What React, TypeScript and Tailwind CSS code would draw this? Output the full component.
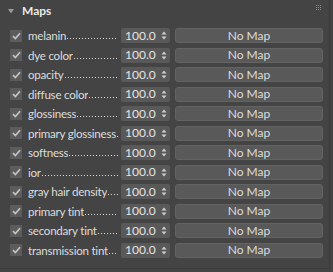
import React from "react";

const rows = [
  "melanin",
  "dye color",
  "opacity",
  "diffuse color",
  "glossiness",
  "primary glossiness",
  "softness",
  "ior",
  "gray hair density",
  "primary tint",
  "secondary tint",
  "transmission tint",
];

const Check = () => (
  <div className="flex h-[12px] w-[12px] items-center justify-center bg-[#5c5c5c]">
    <svg width="9" height="8" viewBox="0 0 9 8">
      <path d="M1 4.2 L3.4 6.5 L8 1.3" fill="none" stroke="#c4c4c4" strokeWidth="1.7" />
    </svg>
  </div>
);

const Spinner = () => (
  <div className="flex h-[15px] w-[49px] items-center justify-between rounded-[2px] bg-[#595959] pl-[4px] pr-[3px]">
    <span className="text-[12px] leading-none text-[#e4e4e4]">100.0</span>
    <svg width="6" height="9" viewBox="0 0 6 9">
      <path d="M3 0.5 L5.5 3.5 L0.5 3.5 Z" fill="#cfcfcf" />
      <path d="M3 8.5 L5.5 5.5 L0.5 5.5 Z" fill="#cfcfcf" />
    </svg>
  </div>
);

const Row = ({ label }: { label: string }) => (
  <div className="flex h-[19.5px] items-center">
    <div className="ml-[10px]">
      <Check />
    </div>
    <div className="ml-[6px] flex w-[90px] items-end text-[11.6px] leading-[15px] tracking-[-0.25px] text-[#dcdcdc]">
      <span className="min-w-0 shrink overflow-hidden text-ellipsis whitespace-nowrap">{label}</span>
      <div className="mb-[4px] ml-[1px] h-[1px] min-w-0 flex-1 bg-[linear-gradient(to_right,#dedede_1px,transparent_1px)] bg-[length:3px_1px]" />
    </div>
    <div className="ml-[3px]">
      <Spinner />
    </div>
    <button className="ml-[5px] flex h-[15px] w-[148px] items-center justify-center rounded-[3px] border border-[#636363] bg-[#595959] text-[12px] leading-none text-[#dcdcdc]">
      No Map
    </button>
  </div>
);

export default function App() {
  return (
    <div
      className="h-[272px] w-[333px] overflow-hidden bg-[#444444]"
      style={{ fontFamily: 'Lato, "Liberation Sans", sans-serif' }}
    >
      <div className="h-[269px] w-[330px] border-b border-r border-[#3a3a3a]">
        <div className="relative flex h-[22px] items-center">
          <svg className="ml-[8px]" width="6" height="5" viewBox="0 0 6 5">
            <path d="M0 0 L6 0 L3 4.5 Z" fill="#9a9a9a" />
          </svg>
          <span className="ml-[8px] text-[12px] font-bold leading-none text-[#e8e8e8]">Maps</span>
          <div className="absolute right-[8px] top-[5px] grid grid-cols-3 gap-[1px]">
            {Array.from({ length: 9 }).map((_, i) => (
              <div key={i} className="h-[1px] w-[1px] bg-[#8a8a8a]" />
            ))}
          </div>
        </div>
        <div className="mt-[4px]">
          {rows.map((r) => (
            <Row key={r} label={r} />
          ))}
        </div>
      </div>
    </div>
  );
}
